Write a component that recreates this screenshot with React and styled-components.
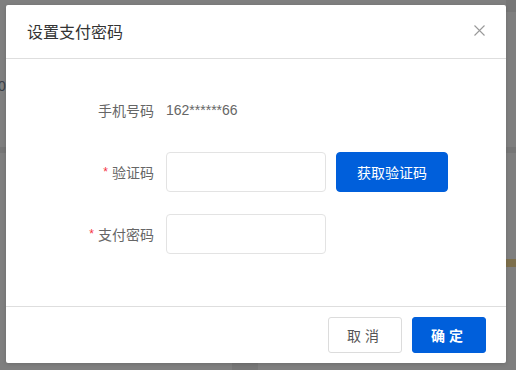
import React from "react";
import styled, { createGlobalStyle } from "styled-components";

const GlobalStyle = createGlobalStyle`
  html, body {
    margin: 0;
    padding: 0;
    background: #7f7f7f;
  }
  * {
    box-sizing: border-box;
  }
`;

const Backdrop = styled.div`
  position: relative;
  width: 516px;
  height: 370px;
  background: #7f7f7f;
  padding: 5px 10px 7px 6px;
  font-family: "Liberation Sans", "Noto Sans CJK SC", sans-serif;
  overflow: hidden;
`;

// faint bits of the page that shows through the overlay
const Ghost = styled.div`
  position: absolute;
  background: ${(p) => p.$color || "#797979"};
`;

const GhostText = styled.span`
  position: absolute;
  left: -2px;
  top: 78px;
  font-size: 14px;
  color: #3a3f48;
`;

const Modal = styled.div`
  position: relative;
  width: 500px;
  height: 358px;
  background: #fff;
  border-radius: 2px;
  display: flex;
  flex-direction: column;
  box-shadow: 0 1px 4px rgba(0, 0, 0, 0.15);
`;

const Header = styled.div`
  height: 54px;
  display: flex;
  align-items: center;
  justify-content: space-between;
  padding: 0 20px 2px 21px;
  border-bottom: 1px solid #dedede;
`;

const Title = styled.h3`
  margin: 0;
  font-size: 16px;
  font-weight: 400;
  color: #333;
`;

const CloseButton = styled.button`
  border: none;
  background: transparent;
  padding: 0;
  width: 14px;
  height: 14px;
  display: flex;
  align-items: center;
  justify-content: center;
  cursor: pointer;
`;

const Body = styled.div`
  flex: 1;
  padding-top: 31px;
  display: grid;
  grid-template-columns: 148px auto;
  grid-auto-rows: 40px;
  row-gap: 22px;
  column-gap: 12px;
  align-content: start;
`;

const Label = styled.label`
  display: flex;
  align-items: center;
  justify-content: flex-end;
  font-size: 14px;
  color: #666;
`;

const Star = styled.span`
  color: #f5333f;
  margin-right: 4px;
  font-size: 12px;
`;

const Field = styled.div`
  display: flex;
  align-items: center;
  gap: 10px;
`;

const Value = styled.span`
  font-size: 14px;
  color: #666;
`;

const Input = styled.input`
  width: 160px;
  height: 40px;
  border: 1px solid #e3e3e3;
  border-radius: 4px;
  padding: 0 10px;
  font-size: 14px;
  outline: none;
`;

const Button = styled.button`
  height: ${(p) => p.$height || "40px"};
  width: ${(p) => p.$width || "auto"};
  border-radius: ${(p) => p.$radius || "4px"};
  border: 1px solid ${(p) => (p.$primary ? "#005fdb" : "#dcdcdc")};
  background: ${(p) => (p.$primary ? "#005fdb" : "#fff")};
  color: ${(p) => (p.$primary ? "#fff" : "#555")};
  font-family: inherit;
  font-size: 14px;
  font-weight: ${(p) => (p.$bold ? 700 : 400)};
  letter-spacing: ${(p) => p.$spacing || "0"};
  cursor: pointer;
  padding: 0;
`;

const Footer = styled.div`
  height: 57px;
  border-top: 1px solid #dedede;
  display: flex;
  justify-content: flex-end;
  align-items: flex-start;
  gap: 10px;
  padding: 10px 20px 0;
`;

const CloseIcon = () => (
  <svg width="11" height="11" viewBox="0 0 11 11">
    <path d="M0.5 0.5 L10.5 10.5 M10.5 0.5 L0.5 10.5" stroke="#999" strokeWidth="1.1" />
  </svg>
);

export default function App() {
  return (
    <>
      <GlobalStyle />
      <Backdrop>
        <Ghost style={{ left: 506, top: 0, width: 10, height: 12 }} $color="#777" />
        <Ghost style={{ left: 0, top: 147, width: 6, height: 6 }} $color="#767676" />
        <Ghost style={{ left: 506, top: 147, width: 10, height: 6 }} $color="#767676" />
        <Ghost style={{ left: 506, top: 259, width: 10, height: 8 }} $color="#7d6f4c" />
        <Ghost style={{ left: 232, top: 363, width: 26, height: 7 }} $color="#777" />
        <GhostText>0</GhostText>
        <Modal>
          <Header>
            <Title>设置支付密码</Title>
            <CloseButton aria-label="close">
              <CloseIcon />
            </CloseButton>
          </Header>
          <Body>
            <Label>手机号码</Label>
            <Field>
              <Value>162******66</Value>
            </Field>
            <Label>
              <Star>*</Star>验证码
            </Label>
            <Field>
              <Input />
              <Button $primary $width="112px">获取验证码</Button>
            </Field>
            <Label>
              <Star>*</Star>支付密码
            </Label>
            <Field>
              <Input type="password" />
            </Field>
          </Body>
          <Footer>
            <Button $width="74px" $height="36px" $radius="3px" $spacing="4px">
              取消
            </Button>
            <Button $primary $bold $width="74px" $height="36px" $radius="3px" $spacing="4px">
              确定
            </Button>
          </Footer>
        </Modal>
      </Backdrop>
    </>
  );
}
